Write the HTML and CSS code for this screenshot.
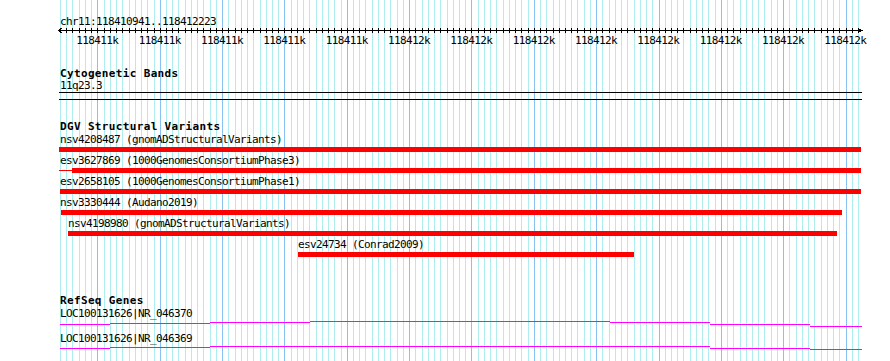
FILE: index.html
```html
<!DOCTYPE html>
<html>
<head>
    <meta charset="utf-8">
    <link rel="stylesheet" href="styles.css">
    <script src="script.js"></script>
</head>
<body>
<div class="browser">
    <svg id="grid" class="grid" width="804" height="361"></svg>

    <div class="locus">chr11:118410941..118412223</div>
    <svg id="ruler" class="ruler" width="806" height="6"></svg>
    <div class="scale">
        <span>118411k</span><span>118411k</span><span>118411k</span><span>118411k</span><span>118411k</span>
        <span>118412k</span><span>118412k</span><span>118412k</span><span>118412k</span><span>118412k</span>
        <span>118412k</span><span>118412k</span><span>118412k</span>
    </div>

    <div class="track cyto">
        <h4>Cytogenetic Bands</h4>
        <div class="label">11q23.3</div>
        <div class="band"></div>
    </div>

    <div class="track dgv">
        <h4>DGV Structural Variants</h4>
        <div class="feature">
            <div class="label">nsv4208487 (gnomADStructuralVariants)</div>
            <div class="bars"><div class="bar" style="margin-left:-1px;width:802px"></div></div>
        </div>
        <div class="feature">
            <div class="label">esv3627869 (1000GenomesConsortiumPhase3)</div>
            <div class="bars"><div class="tail" style="margin-left:-1px;width:13px"></div><div class="bar" style="width:789px"></div></div>
        </div>
        <div class="feature">
            <div class="label">esv2658105 (1000GenomesConsortiumPhase1)</div>
            <div class="bars"><div class="bar" style="width:801px"></div></div>
        </div>
        <div class="feature">
            <div class="label">nsv3330444 (Audano2019)</div>
            <div class="bars"><div class="bar" style="margin-left:1px;width:781px"></div></div>
        </div>
        <div class="feature">
            <div class="label" style="margin-left:8px">nsv4198980 (gnomADStructuralVariants)</div>
            <div class="bars"><div class="bar" style="margin-left:8px;width:769px"></div></div>
        </div>
        <div class="feature">
            <div class="label" style="margin-left:238px">esv24734 (Conrad2009)</div>
            <div class="bars"><div class="bar" style="margin-left:238px;width:336px"></div></div>
        </div>
    </div>

    <div class="track genes">
        <h4>RefSeq Genes</h4>
        <div class="gene">
            <div class="label">LOC100131626|NR_046370</div>
            <svg class="transcript" width="802" height="12">
                <path d="M0 4.5h50M50 3.5h100M150 2.5h100M250 1.5h300M550 2.5h100M650 4.5h100M750 6.5h52"/>
            </svg>
        </div>
        <div class="gene">
            <div class="label">LOC100131626|NR_046369</div>
            <svg class="transcript" width="802" height="12">
                <path d="M0 3.5h50M50 2.5h100M150 1.5h100M250 1.5h300M550 1.5h100M650 3.5h100M750 4.5h52"/>
            </svg>
        </div>
    </div>
</div>
</body>
</html>
```

FILE: styles.css
```css
body {
    margin: 0;
    background-color: #FFF;
    color: #000;
    font-family: "DejaVu Sans Mono", "Liberation Mono", monospace;
    font-size: 11px;
    letter-spacing: -0.62px;
}

.browser {
    position: relative;
    z-index: 0;
    box-sizing: border-box;
    width: 890px;
    height: 361px;
    padding: 15px 0 0 60px;
    overflow: hidden;
}

.grid {
    position: absolute;
    z-index: -1;
    top: 0;
    left: 60px;
    shape-rendering: crispEdges;
}

.locus {
    line-height: 13px;
    white-space: nowrap;
}

.ruler {
    display: block;
    margin-left: -2px;
    shape-rendering: crispEdges;
}

.scale {
    display: flex;
    padding-left: 6.23px;
    line-height: 13px;
    white-space: nowrap;
}

.scale span {
    flex: none;
    width: 62.34px;
    text-align: center;
}

.track h4 {
    margin: 0;
    font-size: 11px;
    font-weight: bold;
    letter-spacing: 0.35px;
    line-height: 12px;
    white-space: nowrap;
}

.label {
    white-space: nowrap;
}

.cyto {
    margin-top: 20px;
}

.cyto h4 {
    line-height: 13px;
}

.cyto .label {
    line-height: 12px;
}

.band {
    width: 803px;
    height: 6px;
    margin-left: -1px;
    border-top: 1px solid #000;
    border-bottom: 1px solid #000;
}

.dgv {
    margin-top: 21px;
}

.feature {
    height: 21px;
}

.feature .label {
    line-height: 13px;
}

.bars {
    display: flex;
    align-items: center;
    height: 5px;
    margin-top: 1px;
}

.bar {
    flex: none;
    height: 5px;
    background-color: #F00;
}

.tail {
    flex: none;
    height: 1px;
    background-color: #F00;
}

.genes {
    margin-top: 36px;
}

.gene .label {
    line-height: 13px;
}

.transcript {
    display: block;
    shape-rendering: crispEdges;
}

.transcript path {
    fill: none;
    stroke: #F0F;
    stroke-width: 1;
}
```

FILE: script.js
```js
document.addEventListener("DOMContentLoaded", function() {
    var count = 128;
    var step = 798 / count;
    var lines = "";
    var ticks = '<path d="M0 2.5H804M4 0.5L0 2.5L4 4.5M800 0.5L804 2.5L800 4.5" stroke="#000" fill="none"/>';

    for (var i = 0; i <= count; i++) {
        var x = Math.round(i * step) + 0.5;
        var major = (i - 6) % 10 == 0;
        lines += '<line x1="' + x + '" y1="0" x2="' + x + '" y2="361" stroke="' + (major ? "#88c2f2" : "#aeeeee") + '"/>';
        ticks += '<line x1="' + (x + 2) + '" y1="0" x2="' + (x + 2) + '" y2="5" stroke="#000"/>';
    }

    document.getElementById("grid").innerHTML = lines;
    document.getElementById("ruler").innerHTML = ticks;
});
```
